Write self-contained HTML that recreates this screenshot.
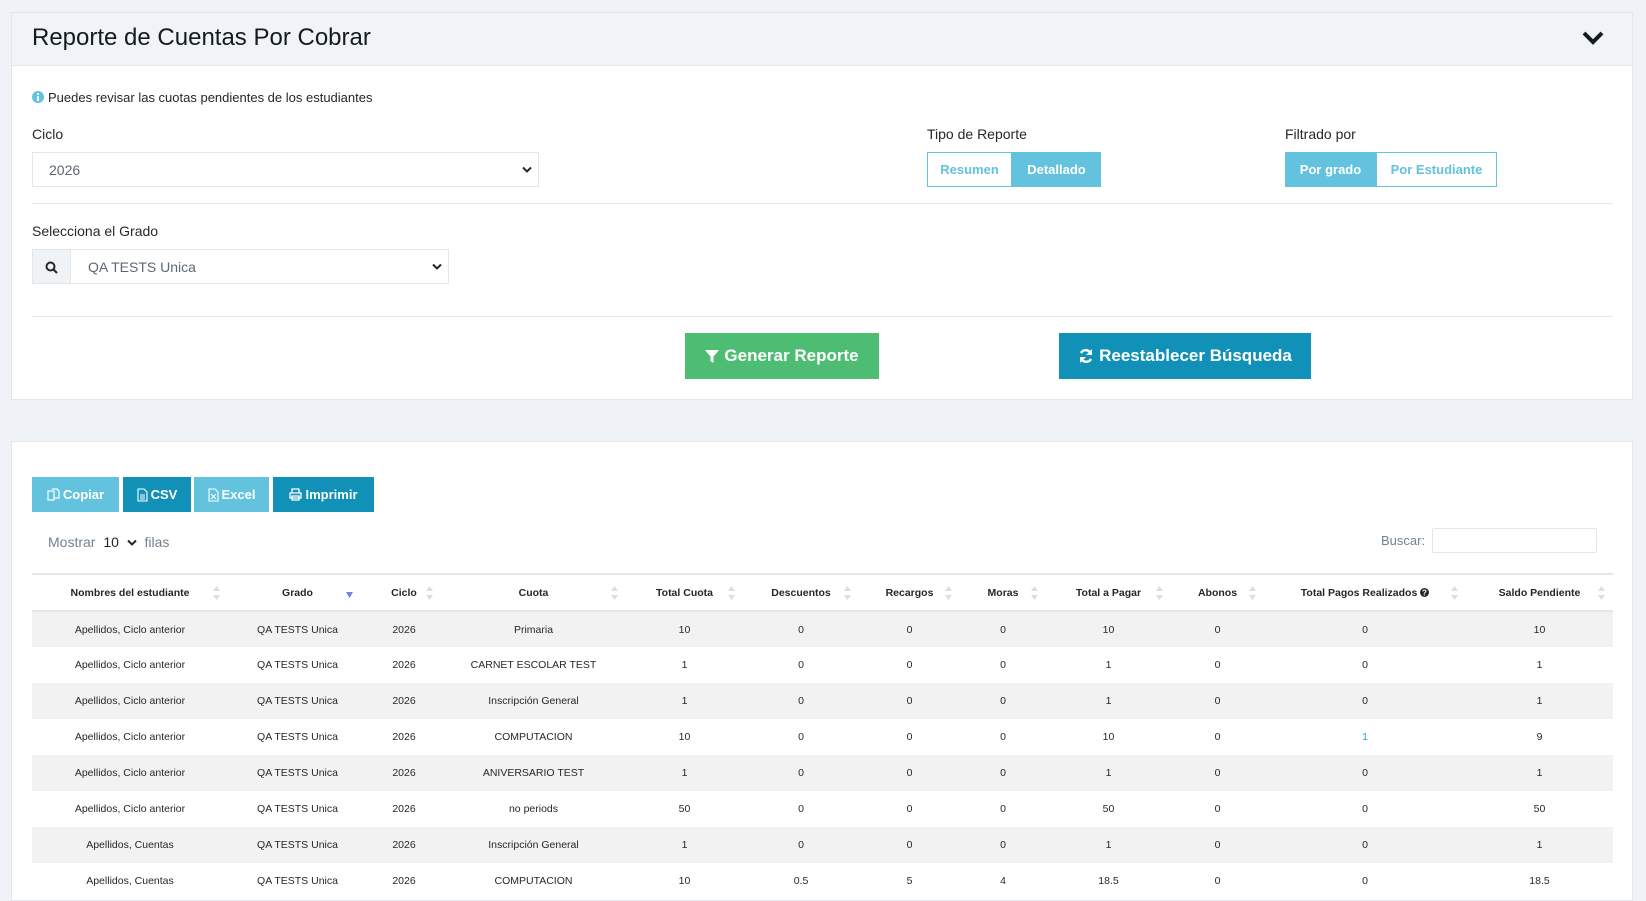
<!DOCTYPE html>
<html><head><meta charset="utf-8"><style>
*{box-sizing:border-box;margin:0;padding:0}
body{width:1646px;height:893px;background:#eff2f7;font-family:"Liberation Sans",sans-serif;color:#23282c;position:relative;overflow:hidden}
.a{position:absolute}
.panel{position:absolute;left:11px;width:1622px;background:#fff;border:1px solid #e4e7ea}
.lbl{position:absolute;font-size:14px;color:#23282c}
.btn{position:absolute;color:#fff;font-weight:bold;display:flex;align-items:center;justify-content:center}
.sel{position:absolute;border:1px solid #e4e7ea;background:#fff;font-size:14px;color:#5c6873;display:flex;align-items:center}
.chev{position:absolute;right:6px;top:13px}
table{border-collapse:collapse;table-layout:fixed;position:absolute;left:32px;top:573px;width:1581px}
th{height:37px;font-size:10.5px;font-weight:bold;border-top:2px solid #e4e7ea;border-bottom:2px solid #e4e7ea;position:relative;text-align:center}
td{height:36px;font-size:10.5px;text-align:center;color:#23282c}
tr:nth-child(odd) td{background:#f2f2f2}
.s{position:absolute;right:8px;top:11px;width:7px;height:14px}
</style></head><body>
<div class="panel" style="top:12px;height:388px">
 <div class="a" style="left:0;top:0;width:1620px;height:53px;background:#f0f3f8;border-bottom:1px solid #e4e7ea"></div>
</div>
<div class="a" style="left:32px;top:24px;font-size:24px;color:#151b1e">Reporte de Cuentas Por Cobrar</div>
<svg class="a" style="left:1582px;top:30px" width="22" height="16" viewBox="0 0 22 16"><path d="M2 3 L11 12 L20 3" stroke="#151b1e" stroke-width="4" fill="none"/></svg>
<svg class="a" style="left:32px;top:91px" width="12" height="12"><circle cx="6" cy="6" r="6" fill="#63c2de"/><rect x="5" y="5" width="2" height="5" fill="#fff"/><rect x="5" y="2" width="2" height="2" fill="#fff"/></svg>
<div class="lbl" style="left:48px;top:90px;font-size:13px">Puedes revisar las cuotas pendientes de los estudiantes</div>
<div class="lbl" style="left:32px;top:126px">Ciclo</div>
<div class="sel" style="left:32px;top:152px;width:507px;height:35px;padding-left:16px">2026<svg class="chev" width="10" height="8"><path d="M1 1.5 L5 5.5 L9 1.5" stroke="#23282c" stroke-width="2" fill="none"/></svg></div>
<div class="a" style="left:32px;top:203px;width:1581px;height:1px;background:#e4e7ea"></div>
<div class="lbl" style="left:32px;top:223px">Selecciona el Grado</div>
<div class="sel" style="left:32px;top:249px;width:417px;height:35px;padding-left:55px">QA TESTS Unica<svg class="chev" width="10" height="8"><path d="M1 1.5 L5 5.5 L9 1.5" stroke="#23282c" stroke-width="2" fill="none"/></svg></div>
<div class="a" style="left:33px;top:250px;width:38px;height:33px;background:#f0f3f5;border-right:1px solid #e4e7ea"></div>
<svg class="a" style="left:45px;top:261px" width="13" height="13"><circle cx="5.5" cy="5.5" r="4" stroke="#23282c" stroke-width="2" fill="none"/><path d="M8.5 8.5 L12 12" stroke="#23282c" stroke-width="2.2"/></svg>
<div class="a" style="left:32px;top:316px;width:1581px;height:1px;background:#e4e7ea"></div>
<div class="lbl" style="left:927px;top:126px">Tipo de Reporte</div>
<div class="btn" style="left:927px;top:152px;width:85px;height:35px;border:1px solid #63c2de;background:#fff;color:#63c2de;font-size:13px">Resumen</div>
<div class="btn" style="left:1012px;top:152px;width:89px;height:35px;background:#63c2de;font-size:13px">Detallado</div>
<div class="lbl" style="left:1285px;top:126px">Filtrado por</div>
<div class="btn" style="left:1285px;top:152px;width:91px;height:35px;background:#63c2de;font-size:13px">Por grado</div>
<div class="btn" style="left:1376px;top:152px;width:121px;height:35px;border:1px solid #63c2de;background:#fff;color:#63c2de;font-size:13px">Por Estudiante</div>
<div class="btn" style="left:685px;top:333px;width:194px;height:46px;background:#4dbd74;font-size:17px"><svg width="14" height="15" style="margin-right:5px"><path d="M0 1 H14 L8.5 7.5 V14 L5.5 12 V7.5 Z" fill="#fff"/></svg>Generar Reporte</div>
<div class="btn" style="left:1059px;top:333px;width:252px;height:46px;background:#1191b8;font-size:17px"><svg width="16" height="16" style="margin-right:5px"><path d="M13 6 A5.5 5.5 0 0 0 3 5 M3 10 A5.5 5.5 0 0 0 13 11" stroke="#fff" stroke-width="2.4" fill="none"/><path d="M14 1 V7 H8 Z M2 15 V9 H8 Z" fill="#fff"/></svg>Reestablecer Búsqueda</div>

<div class="panel" style="top:441px;height:460px"></div>
<div class="btn" style="left:32px;top:477px;width:87px;height:35px;background:#63c2de;font-size:13px"><svg width="13" height="14" style="margin-right:3px"><path d="M1 3 H7 V12 H1Z M5 1 H10 L12 3 V10 H7" stroke="#fff" stroke-width="1.2" fill="none"/></svg>Copiar</div>
<div class="btn" style="left:123px;top:477px;width:68px;height:35px;background:#1191b8;font-size:13px"><svg width="11" height="14" style="margin-right:3px"><path d="M1 1 H7 L10 4 V13 H1Z M3 7 H8 M3 9 H8 M3 11 H8" stroke="#fff" stroke-width="1.1" fill="none"/></svg>CSV</div>
<div class="btn" style="left:194px;top:477px;width:75px;height:35px;background:#63c2de;font-size:13px"><svg width="11" height="14" style="margin-right:3px"><path d="M1 1 H7 L10 4 V13 H1Z M3 6 L8 11 M8 6 L3 11" stroke="#fff" stroke-width="1.1" fill="none"/></svg>Excel</div>
<div class="btn" style="left:273px;top:477px;width:101px;height:35px;background:#1191b8;font-size:13px"><svg width="13" height="13" style="margin-right:3px"><path d="M3 5 V1 H10 V5 M1 5 H12 V10 H1Z M3 8 H10 V12 H3Z" stroke="#fff" stroke-width="1.3" fill="none"/></svg>Imprimir</div>
<div class="lbl" style="left:48px;top:534px;color:#73818f">Mostrar <span style="color:#23282c;margin-left:4px">10 &nbsp;<svg width="10" height="8"><path d="M1 1.5 L5 5.5 L9 1.5" stroke="#23282c" stroke-width="2" fill="none"/></svg></span> &nbsp;filas</div>
<div class="lbl" style="left:1381px;top:533px;font-size:13px;color:#73818f">Buscar:</div>
<div class="a" style="left:1432px;top:528px;width:165px;height:25px;border:1px solid #e4e7ea;border-radius:2px"></div>
<table>
<colgroup><col style="width:196px"><col style="width:139px"><col style="width:74px"><col style="width:185px"><col style="width:117px"><col style="width:116px"><col style="width:101px"><col style="width:86px"><col style="width:125px"><col style="width:93px"><col style="width:202px"><col style="width:147px"></colgroup>
<thead><tr>
<th>Nombres del estudiante<svg class="s"><path d="M3.5 0 L7 5 H0Z M3.5 14 L7 9 H0Z" fill="#ddd"/></svg></th>
<th>Grado<svg class="s" style="top:17px;right:14px"><path d="M0 0 H7 L3.5 6Z" fill="#7b7fdd"/></svg></th>
<th>Ciclo<svg class="s"><path d="M3.5 0 L7 5 H0Z M3.5 14 L7 9 H0Z" fill="#ddd"/></svg></th>
<th>Cuota<svg class="s"><path d="M3.5 0 L7 5 H0Z M3.5 14 L7 9 H0Z" fill="#ddd"/></svg></th>
<th>Total Cuota<svg class="s"><path d="M3.5 0 L7 5 H0Z M3.5 14 L7 9 H0Z" fill="#ddd"/></svg></th>
<th>Descuentos<svg class="s"><path d="M3.5 0 L7 5 H0Z M3.5 14 L7 9 H0Z" fill="#ddd"/></svg></th>
<th>Recargos<svg class="s"><path d="M3.5 0 L7 5 H0Z M3.5 14 L7 9 H0Z" fill="#ddd"/></svg></th>
<th>Moras<svg class="s"><path d="M3.5 0 L7 5 H0Z M3.5 14 L7 9 H0Z" fill="#ddd"/></svg></th>
<th>Total a Pagar<svg class="s"><path d="M3.5 0 L7 5 H0Z M3.5 14 L7 9 H0Z" fill="#ddd"/></svg></th>
<th>Abonos<svg class="s"><path d="M3.5 0 L7 5 H0Z M3.5 14 L7 9 H0Z" fill="#ddd"/></svg></th>
<th>Total Pagos Realizados <svg width="9" height="9" style="vertical-align:-1px"><circle cx="4.5" cy="4.5" r="4.5" fill="#23282c"/><text x="4.5" y="7.5" font-size="8" font-weight="bold" fill="#fff" text-anchor="middle" font-family="Liberation Sans">?</text></svg><svg class="s"><path d="M3.5 0 L7 5 H0Z M3.5 14 L7 9 H0Z" fill="#ddd"/></svg></th>
<th>Saldo Pendiente<svg class="s"><path d="M3.5 0 L7 5 H0Z M3.5 14 L7 9 H0Z" fill="#ddd"/></svg></th>
</tr></thead>
<tbody>
<tr><td>Apellidos, Ciclo anterior</td><td>QA TESTS Unica</td><td>2026</td><td>Primaria</td><td>10</td><td>0</td><td>0</td><td>0</td><td>10</td><td>0</td><td>0</td><td>10</td></tr>
<tr><td>Apellidos, Ciclo anterior</td><td>QA TESTS Unica</td><td>2026</td><td>CARNET ESCOLAR TEST</td><td>1</td><td>0</td><td>0</td><td>0</td><td>1</td><td>0</td><td>0</td><td>1</td></tr>
<tr><td>Apellidos, Ciclo anterior</td><td>QA TESTS Unica</td><td>2026</td><td>Inscripción General</td><td>1</td><td>0</td><td>0</td><td>0</td><td>1</td><td>0</td><td>0</td><td>1</td></tr>
<tr><td>Apellidos, Ciclo anterior</td><td>QA TESTS Unica</td><td>2026</td><td>COMPUTACION</td><td>10</td><td>0</td><td>0</td><td>0</td><td>10</td><td>0</td><td style="color:#20a8d8">1</td><td>9</td></tr>
<tr><td>Apellidos, Ciclo anterior</td><td>QA TESTS Unica</td><td>2026</td><td>ANIVERSARIO TEST</td><td>1</td><td>0</td><td>0</td><td>0</td><td>1</td><td>0</td><td>0</td><td>1</td></tr>
<tr><td>Apellidos, Ciclo anterior</td><td>QA TESTS Unica</td><td>2026</td><td>no periods</td><td>50</td><td>0</td><td>0</td><td>0</td><td>50</td><td>0</td><td>0</td><td>50</td></tr>
<tr><td>Apellidos, Cuentas</td><td>QA TESTS Unica</td><td>2026</td><td>Inscripción General</td><td>1</td><td>0</td><td>0</td><td>0</td><td>1</td><td>0</td><td>0</td><td>1</td></tr>
<tr><td>Apellidos, Cuentas</td><td>QA TESTS Unica</td><td>2026</td><td>COMPUTACION</td><td>10</td><td>0.5</td><td>5</td><td>4</td><td>18.5</td><td>0</td><td>0</td><td>18.5</td></tr>
</tbody></table>
</body></html>
